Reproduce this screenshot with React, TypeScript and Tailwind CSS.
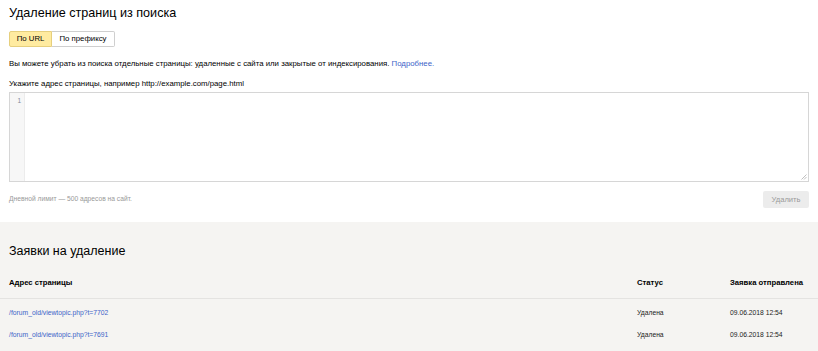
import React from "react";

export default function App() {
  const rows = [
    { url: "/forum_old/viewtopic.php?t=7702", status: "Удалена", date: "09.06.2018 12:54" },
    { url: "/forum_old/viewtopic.php?t=7691", status: "Удалена", date: "09.06.2018 12:54" },
  ];
  return (
    <div className="w-[818px] h-[351px] overflow-hidden bg-white text-black" style={{ fontFamily: '"Liberation Sans", Arial, sans-serif' }}>
      <div className="h-[222px] px-[9px]">
        <h1 className="h-[26px] flex items-center text-[12.6px] font-normal">Удаление страниц из поиска</h1>
        <div className="mt-[5px] flex text-[7.8px]">
          <div className="h-[16px] w-[43px] flex items-center justify-center bg-[#ffeba0] border border-[#e6cf7d] rounded-l-[2px]">По URL</div>
          <div className="h-[16px] w-[63px] flex items-center justify-center bg-white border border-l-0 border-[#cfcfcf] rounded-r-[2px]">По префиксу</div>
        </div>
        <p className="mt-[10px] h-[14px] flex items-center text-[7.8px]">
          Вы можете убрать из поиска отдельные страницы: удаленные с сайта или закрытые от индексирования.&nbsp;
          <span className="text-[#3c63c8]">Подробнее.</span>
        </p>
        <p className="mt-[6px] h-[14px] flex items-center text-[7.8px]">Укажите адрес страницы, например http://example.com/page.html</p>
        <div className="relative mt-[1px] h-[90px] border border-[#d6d6d6] flex">
          <div className="w-[15px] bg-[#f7f7f7] border-r border-[#ececec] text-[6.5px] text-[#7f8a99] text-right pr-[3px] pt-[3px]">1</div>
          <div className="flex-1" />
          <svg className="absolute right-[1px] bottom-[1px]" width="6" height="6" viewBox="0 0 6 6">
            <path d="M5.5 0.5 L0.5 5.5 M5.5 3 L3 5.5" stroke="#b0b0b0" strokeWidth="0.8" />
          </svg>
        </div>
        <div className="mt-[9px] flex items-center justify-between">
          <span className="text-[6.7px] text-[#999]">Дневной лимит — 500 адресов на сайт.</span>
          <div className="h-[17px] w-[46px] bg-[#ececec] rounded-[2px] text-[7.6px] text-[#9a9a9a] flex items-center justify-center">Удалить</div>
        </div>
      </div>
      <div className="bg-[#f5f4f2] h-[129px] pt-[19px]">
        <h2 className="px-[9px] h-[20px] flex items-center text-[12.5px] font-normal">Заявки на удаление</h2>
        <div className="mt-[7px] flex px-[9px] text-[7.7px] font-bold h-[31px] items-center border-b border-[#e4e3e1]">
          <div className="flex-1">Адрес страницы</div>
          <div className="w-[93px]">Статус</div>
          <div className="w-[79px]">Заявка отправлена</div>
        </div>
        <div className="pt-[3px]">
          {rows.map((r) => (
            <div key={r.url} className="flex px-[9px] text-[6.75px] h-[22px] items-center text-[#222]">
              <div className="flex-1 text-[#3c63c8]">{r.url}</div>
              <div className="w-[93px]">{r.status}</div>
              <div className="w-[79px]">{r.date}</div>
            </div>
          ))}
        </div>
      </div>
    </div>
  );
}
